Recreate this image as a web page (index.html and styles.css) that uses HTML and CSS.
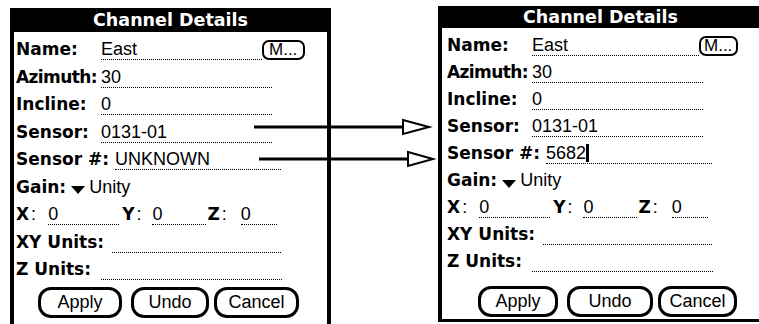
FILE: index.html
```html
<!DOCTYPE html>
<html lang="en">
<head>
    <meta charset="UTF-8">
    <title>Channel Details</title>
    <link rel="stylesheet" href="styles.css">
</head>
<body>
    <div class="stage">
        <!-- before: sensor number unknown -->
        <section class="palm palm-left">
            <header class="title">Channel Details</header>
            <div class="form">
                <div class="row">
                    <span class="label col">Name:</span>
                    <span class="field f-name">East</span>
                    <span class="mbtn">M...</span>
                </div>
                <div class="row">
                    <span class="label col tight">Azimuth:</span>
                    <span class="field f-std">30</span>
                </div>
                <div class="row">
                    <span class="label col">Incline:</span>
                    <span class="field f-std">0</span>
                </div>
                <div class="row">
                    <span class="label col">Sensor:</span>
                    <span class="field f-std">0131-01</span>
                </div>
                <div class="row">
                    <span class="label">Sensor #:</span>
                    <span class="field f-num">UNKNOWN</span>
                </div>
                <div class="row">
                    <span class="label">Gain:</span>
                    <span class="arrow-down"></span>
                    <span class="value">Unity</span>
                </div>
                <div class="row">
                    <span class="label">X</span><span class="colon">:</span>
                    <span class="field f-x">0</span>
                    <span class="label l-y">Y</span><span class="colon">:</span>
                    <span class="field f-y">0</span>
                    <span class="label l-z">Z</span><span class="colon">:</span>
                    <span class="field f-z">0</span>
                </div>
                <div class="row">
                    <span class="label">XY Units:</span>
                    <span class="field f-xy">&nbsp;</span>
                </div>
                <div class="row">
                    <span class="label">Z Units:</span>
                    <span class="field f-zu">&nbsp;</span>
                </div>
                <div class="buttons">
                    <span class="btn b-apply">Apply</span>
                    <span class="btn b-undo">Undo</span>
                    <span class="btn b-cancel">Cancel</span>
                </div>
            </div>
        </section>

        <!-- after: sensor number entered -->
        <section class="palm palm-right">
            <header class="title">Channel Details</header>
            <div class="form">
                <div class="row">
                    <span class="label col">Name:</span>
                    <span class="field f-name">East</span>
                    <span class="mbtn">M...</span>
                </div>
                <div class="row">
                    <span class="label col tight">Azimuth:</span>
                    <span class="field f-std">30</span>
                </div>
                <div class="row">
                    <span class="label col">Incline:</span>
                    <span class="field f-std">0</span>
                </div>
                <div class="row">
                    <span class="label col">Sensor:</span>
                    <span class="field f-std">0131-01</span>
                </div>
                <div class="row">
                    <span class="label">Sensor #:</span>
                    <span class="field f-num">5682<span class="cursor"></span></span>
                </div>
                <div class="row">
                    <span class="label">Gain:</span>
                    <span class="arrow-down"></span>
                    <span class="value">Unity</span>
                </div>
                <div class="row">
                    <span class="label">X</span><span class="colon">:</span>
                    <span class="field f-x">0</span>
                    <span class="label l-y">Y</span><span class="colon">:</span>
                    <span class="field f-y">0</span>
                    <span class="label l-z">Z</span><span class="colon">:</span>
                    <span class="field f-z">0</span>
                </div>
                <div class="row">
                    <span class="label">XY Units:</span>
                    <span class="field f-xy">&nbsp;</span>
                </div>
                <div class="row">
                    <span class="label">Z Units:</span>
                    <span class="field f-zu">&nbsp;</span>
                </div>
                <div class="buttons">
                    <span class="btn b-apply">Apply</span>
                    <span class="btn b-undo">Undo</span>
                    <span class="btn b-cancel">Cancel</span>
                </div>
            </div>
        </section>

        <svg class="arrows" width="759" height="324" viewBox="0 0 759 324">
            <line x1="254" y1="127" x2="403" y2="127" stroke="#000" stroke-width="3"/>
            <polygon points="403,120 429,127 403,134" fill="#fff" stroke="#000" stroke-width="2"/>
            <line x1="259" y1="159" x2="408" y2="159" stroke="#000" stroke-width="3"/>
            <polygon points="408,152 433,159 408,166" fill="#fff" stroke="#000" stroke-width="2"/>
        </svg>
    </div>
</body>
</html>
```

FILE: styles.css
```css
body {
    margin: 0;
    background: #fff;
    color: #000;
    font-family: "Liberation Sans", Arial, sans-serif;
}
.stage {
    position: relative;
    display: flex;
    align-items: flex-start;
    width: 759px;
    height: 324px;
    overflow: hidden;
}
.palm {
    box-sizing: border-box;
    border-left: 4px solid #000;
    border-right: 4px solid #000;
}
.palm-left {
    margin: 8px 0 0 10px;
    width: 323px;
    height: 316px;
}
.palm-right {
    margin: 6px 0 0 107px;
    width: 323px;
    height: 316px;
    border-right: none;
    border-bottom: 3px solid #000;
}
.title {
    background: #000;
    color: #fff;
    font-family: "DejaVu Sans", sans-serif;
    font-weight: bold;
    font-size: 17.5px;
    text-align: center;
    height: 24px;
    line-height: 24px;
}
.palm-right .title {
    height: 22px;
    line-height: 22px;
}
.form {
    padding: 7px 0 0 2px;
}
.palm-right .form {
    padding: 7px 0 0 5px;
}
.row {
    display: flex;
    align-items: baseline;
    height: 27.5px;
}
.palm-right .row {
    height: 27px;
}
.label {
    font-family: "DejaVu Sans", sans-serif;
    font-weight: bold;
    font-size: 17px;
}
.col {
    width: 85px;
}
.tight {
    letter-spacing: -0.6px;
}
.value, .field {
    font-size: 18px;
}
.field {
    display: inline-block;
    line-height: 19px;
    border-bottom: 1px dotted #000;
}
.f-name { width: 161px; }
.palm-right .f-name { width: 167px; }
.f-std { width: 171px; }
.f-num { width: 166px; margin-left: 6px; }
.f-x { width: 71px; margin-left: 12px; }
.f-y { width: 54px; margin-left: 11px; }
.f-z { width: 36px; margin-left: 14px; }
.l-y { margin-left: 3px; }
.l-z { margin-left: 1px; }
.f-xy { width: 169px; margin-left: 8px; }
.f-zu { width: 181px; margin-left: 10px; }
.colon {
    font-size: 18px;
    margin-left: 2px;
}
.mbtn {
    font-size: 17px;
    border: 2px solid #000;
    border-radius: 7px;
    padding: 0 6px 0 5px;
    line-height: 16px;
}
.palm-right .mbtn {
    padding: 0 4px 0 3px;
}
.arrow-down {
    align-self: center;
    width: 0;
    height: 0;
    border-left: 7px solid transparent;
    border-right: 7px solid transparent;
    border-top: 8px solid #000;
    margin: 0 4px 0 5px;
}
.cursor {
    display: inline-block;
    width: 3px;
    height: 18px;
    background: #000;
    vertical-align: -3px;
}
.buttons {
    display: flex;
    margin: 0 0 0 22px;
}
.palm-right .buttons {
    margin: 8px 0 0 31px;
}
.btn {
    box-sizing: border-box;
    height: 31px;
    line-height: 25px;
    border: 3px solid #000;
    border-radius: 13px;
    text-align: center;
    font-size: 18px;
}
.b-apply { width: 84px; }
.b-undo { width: 78px; margin-left: 9px; }
.b-cancel { width: 85px; margin-left: 5px; }
.palm-right .b-apply { width: 80px; }
.palm-right .b-undo { width: 86px; }
.palm-right .b-cancel { width: 79px; }
.arrows {
    position: absolute;
    left: 0;
    top: 0;
}
```
